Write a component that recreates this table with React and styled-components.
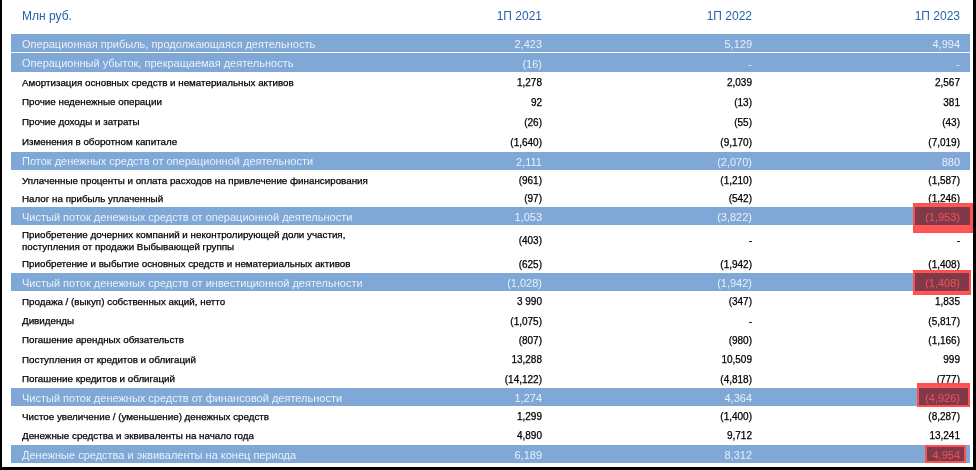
import React from "react";
import styled, { createGlobalStyle } from "styled-components";

const GlobalStyle = createGlobalStyle`
  html, body { margin: 0; padding: 0; background: #fff; }
`;

const COLS = "411px 120px 210px 208px";

const Frame = styled.div`
  width: 976px;
  height: 470px;
  box-sizing: border-box;
  border-left: 2px solid #000;
  border-right: 3px solid #000;
  border-bottom: 3px solid #000;
  padding: 0 3px 0 9px;
  font-family: "Liberation Sans", Arial, sans-serif;
  display: flex;
  flex-direction: column;
  overflow: hidden;
`;

const HeaderRow = styled.div`
  display: grid;
  grid-template-columns: ${COLS};
  padding-right: 10px;
  height: 32.5px;
  flex: none;
  align-items: center;
  color: #2563a6;
  font-size: 12px;
  padding-bottom: 1px;
  box-sizing: border-box;
  white-space: nowrap;
`;

const HeaderLabel = styled.div`
  padding-left: 11px;
`;

const HeaderYear = styled.div`
  text-align: right;
`;

const Row = styled.div`
  display: grid;
  grid-template-columns: ${COLS};
  padding-right: 10px;
  padding-top: 2.5px;
  box-sizing: border-box;
  height: ${(p) => p.$h}px;
  flex: none;
  background: ${(p) => (p.$total ? "#7fa8d6" : "transparent")};
  border-top: ${(p) => (p.$total ? "1px solid #fff" : "0")};
  color: ${(p) => (p.$total ? "#e9f0f9" : "#000")};
  -webkit-text-stroke: ${(p) => (p.$total ? "0" : "0.25px #000")};
`;

const Label = styled.div`
  padding-left: 11px;
  display: flex;
  align-items: center;
  font-size: ${(p) => (p.$total ? "11px" : "9.8px")};
  line-height: ${(p) => (p.$total ? "13px" : "12px")};
  white-space: nowrap;
`;

const Value = styled.div`
  position: relative;
  display: flex;
  align-items: center;
  justify-content: flex-end;
  font-size: ${(p) => (p.$total ? "11px" : "10px")};
`;

const Highlight = styled.span`
  position: absolute;
  box-sizing: border-box;
  border: 2px solid #ff4f4f;
  pointer-events: none;
  &::before {
    content: "";
    position: absolute;
    inset: 0;
    background: #ff5656;
    mix-blend-mode: multiply;
  }
`;

const rows = [
  { l: "Операционная прибыль, продолжающаяся деятельность", v: ["2,423", "5,129", "4,994"], t: true, h: 19.5 },
  { l: "Операционный убыток, прекращаемая деятельность", v: ["(16)", "-", "-"], t: true, h: 19.5 },
  { l: "Амортизация основных средств и нематериальных активов", v: ["1,278", "2,039", "2,567"], h: 19.8 },
  { l: "Прочие неденежные операции", v: ["92", "(13)", "381"], h: 19.8 },
  { l: "Прочие доходы и затраты", v: ["(26)", "(55)", "(43)"], h: 19.8 },
  { l: "Изменения в оборотном капитале", v: ["(1,640)", "(9,170)", "(7,019)"], h: 19.8 },
  { l: "Поток денежных средств от операционной деятельности", v: ["2,111", "(2,070)", "880"], t: true, h: 19 },
  { l: "Уплаченные проценты и оплата расходов на привлечение финансирования", v: ["(961)", "(1,210)", "(1,587)"], h: 19.2 },
  { l: "Налог на прибыль уплаченный", v: ["(97)", "(542)", "(1,246)"], h: 17.1 },
  { l: "Чистый поток денежных средств от операционной деятельности", v: ["1,053", "(3,822)", "(1,953)"], t: true, h: 19, hl: { top: -6.5, bottom: -8, left: 161, right: -13 } },
  { l: ["Приобретение дочерних компаний и неконтролирующей доли участия,", "поступления от продажи Выбывающей группы"], v: ["(403)", "-", "-"], h: 29.5 },
  { l: "Приобретение и выбытие основных средств и нематериальных активов", v: ["(625)", "(1,942)", "(1,408)"], h: 17.5 },
  { l: "Чистый поток денежных средств от инвестиционной деятельности", v: ["(1,028)", "(1,942)", "(1,408)"], t: true, h: 19, hl: { top: -5.5, bottom: -4, left: 161, right: -11 } },
  { l: "Продажа / (выкуп) собственных акций, нетто", v: ["3 990", "(347)", "1,835"], h: 19.3 },
  { l: "Дивиденды", v: ["(1,075)", "-", "(5,817)"], h: 19.3 },
  { l: "Погашение арендных обязательств", v: ["(807)", "(980)", "(1,166)"], h: 19.3 },
  { l: "Поступления от кредитов и облигаций", v: ["13,288", "10,509", "999"], h: 19.3 },
  { l: "Погашение кредитов и облигаций", v: ["(14,122)", "(4,818)", "(777)"], h: 19.3 },
  { l: "Чистый поток денежных средств от финансовой деятельности", v: ["1,274", "4,364", "(4,926)"], t: true, h: 18.5, hl: { top: -7.5, bottom: -1.5, left: 165, right: -10 } },
  { l: "Чистое увеличение / (уменьшение) денежных средств", v: ["1,299", "(1,400)", "(8,287)"], h: 19 },
  { l: "Денежные средства и эквиваленты на начало года", v: ["4,890", "9,712", "13,241"], h: 19 },
  { l: "Денежные средства и эквиваленты на конец периода", v: ["6,189", "8,312", "4,954"], t: true, h: 19, hl: { top: -2.5, bottom: 0, left: 173, right: -6 } },
];

export default function App() {
  return (
    <>
      <GlobalStyle />
      <Frame>
        <HeaderRow>
          <HeaderLabel>Млн руб.</HeaderLabel>
          <HeaderYear>1П 2021</HeaderYear>
          <HeaderYear>1П 2022</HeaderYear>
          <HeaderYear>1П 2023</HeaderYear>
        </HeaderRow>
        {rows.map((r, i) => (
          <Row key={i} $total={r.t} $h={r.h}>
            <Label $total={r.t}>
              {Array.isArray(r.l) ? (
                <span>
                  {r.l[0]}
                  <br />
                  {r.l[1]}
                </span>
              ) : (
                r.l
              )}
            </Label>
            {r.v.map((v, j) => (
              <Value key={j} $total={r.t}>
                <span>{v}</span>
                {j === 2 && r.hl ? (
                  <Highlight style={{ top: r.hl.top, bottom: r.hl.bottom, left: r.hl.left, right: r.hl.right }} />
                ) : null}
              </Value>
            ))}
          </Row>
        ))}
      </Frame>
    </>
  );
}
